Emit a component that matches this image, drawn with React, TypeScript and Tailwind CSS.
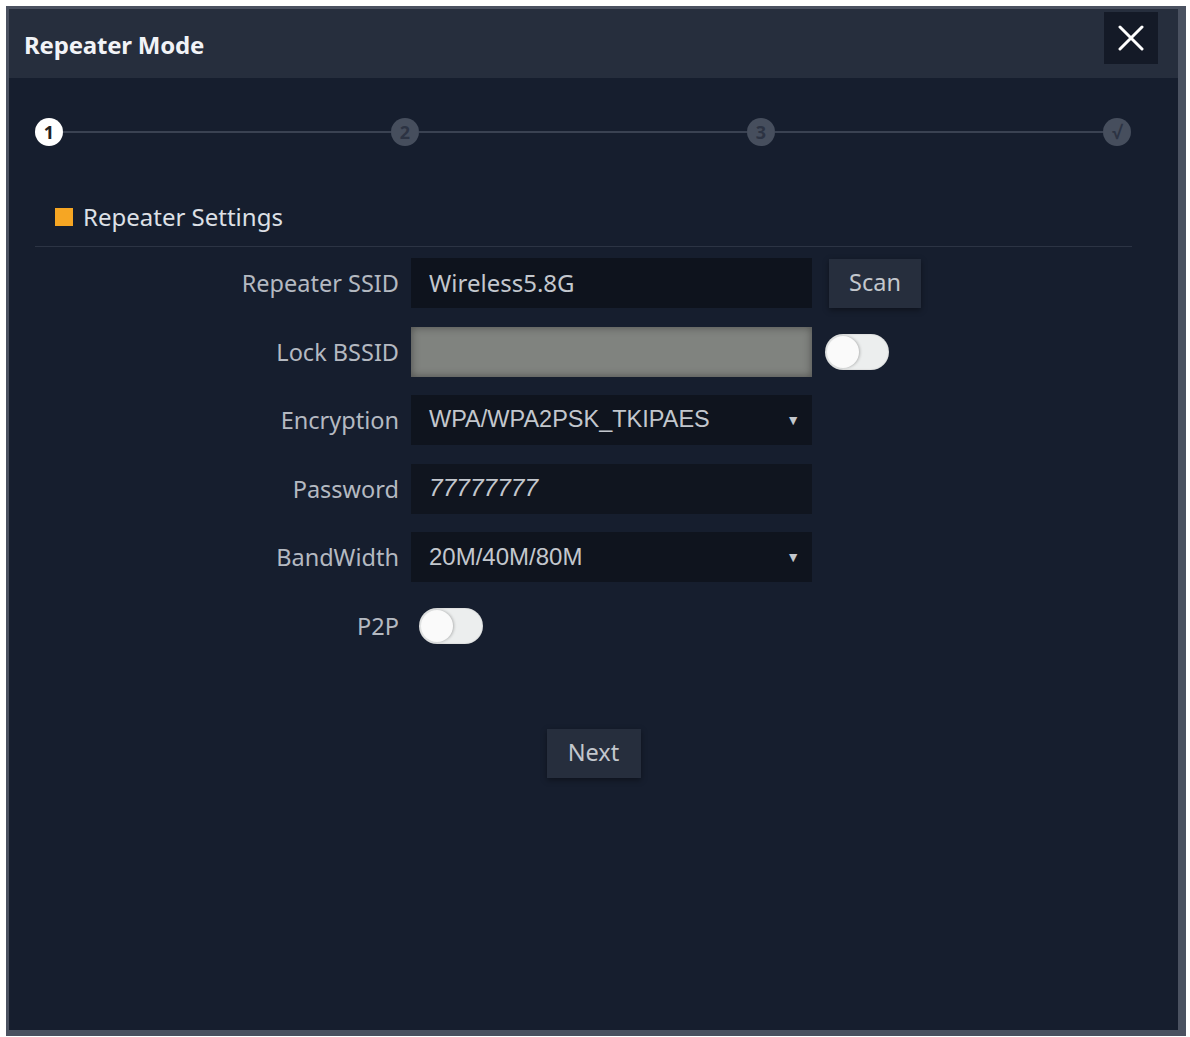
import React from "react";

const labelFont = { fontFamily: '"Noto Sans", "Open Sans", sans-serif' };
const arialFont = { fontFamily: '"Liberation Sans", Arial, sans-serif' };

function Toggle() {
  return (
    <div className="relative w-[64px] h-[36px] rounded-full bg-[#eceeee] shadow-[inset_0_0_2px_rgba(0,0,0,0.2)]">
      <div className="absolute left-[2px] top-[2px] w-[32px] h-[32px] rounded-full bg-[#fafafa] shadow-[1px_0_3px_rgba(0,0,0,0.25)]" />
    </div>
  );
}

function Row({ label, children }: { label: string; children: React.ReactNode }) {
  return (
    <div className="flex items-center h-[50px]">
      <div className="w-[390px] text-right text-[23.5px] text-[#b4b9c1] pt-[2px]" style={labelFont}>
        {label}
      </div>
      <div className="ml-[12px] flex items-center">{children}</div>
    </div>
  );
}

function Step({ n, active }: { n: string; active?: boolean }) {
  return (
    <div
      className={
        "w-[28px] h-[28px] rounded-full flex items-center justify-center text-[18px] font-bold shrink-0 " +
        (active ? "bg-white text-[#222]" : "bg-[#464e5d] text-[#2c3343]")
      }
      style={labelFont}
    >
      {n}
    </div>
  );
}

export default function App() {
  return (
    <div className="w-[1190px] h-[1037px] bg-white pt-[6px] pl-[6px]">
      <div className="w-[1180px] h-[1030px] bg-[#161e2e] border-l-[3px] border-t-[3px] border-r-[8px] border-b-[6px] border-[#4a5160] flex flex-col">
        {/* Header */}
        <div className="h-[69px] bg-[#262e3d] flex items-start justify-between pl-[15px] pr-[20px] shrink-0">
          <div
            className="mt-[21px] text-[24px] font-bold text-[#f1f3f7] leading-[30px] tracking-[-0.2px]"
            style={labelFont}
          >
            Repeater Mode
          </div>
          <div className="mt-[3px] w-[54px] h-[52px] bg-[#141a27] flex items-center justify-center">
            <svg width="26" height="26" viewBox="0 0 26 26">
              <path d="M2 2 L24 24 M24 2 L2 24" stroke="#ffffff" strokeWidth="3" strokeLinecap="round" />
            </svg>
          </div>
        </div>

        {/* Body */}
        <div className="flex flex-col pt-[40px]">
          {/* Stepper */}
          <div className="flex items-center pl-[26px] pr-[47px]">
            <Step n="1" active />
            <div className="flex-1 h-[2px] bg-[#3a4252]" />
            <Step n="2" />
            <div className="flex-1 h-[2px] bg-[#3a4252]" />
            <Step n="3" />
            <div className="flex-1 h-[2px] bg-[#3a4252]" />
            <Step n="√" />
          </div>

          {/* Section heading */}
          <div className="mt-[56px] h-[30px] flex items-center pl-[46px]">
            <div className="w-[18px] h-[18px] bg-[#f6a623]" />
            <div className="ml-[10px] text-[24px] text-[#dde0e6]" style={labelFont}>
              Repeater Settings
            </div>
          </div>
          <div className="mt-[14px] ml-[26px] w-[1097px] h-[1px] bg-[#2c3444]" />

          {/* Form */}
          <div className="mt-[11px] flex flex-col gap-[18.5px]">
            <Row label="Repeater SSID">
              <div className="w-[401px] h-[50px] bg-[#0e131d] flex items-center pl-[18px] text-[24px] text-[#c3c7cd]" style={labelFont}>
                Wireless5.8G
              </div>
              <div className="ml-[17px] w-[92px] h-[49px] bg-[#262e3d] flex items-center justify-center text-[23.5px] text-[#c3c7cd] shadow-[0_2px_6px_rgba(0,0,0,0.4)]" style={labelFont}>
                Scan
              </div>
            </Row>
            <Row label="Lock BSSID">
              <div className="w-[401px] h-[50px] bg-[#80837f] shadow-[inset_0_0_8px_rgba(40,40,40,0.6)]" />
              <div className="ml-[13px]">
                <Toggle />
              </div>
            </Row>
            <Row label="Encryption">
              <div
                className="w-[401px] h-[50px] bg-[#0f141e] flex items-center justify-between pl-[18px] pr-[12px] text-[23.5px] text-[#c3c7cd]"
                style={arialFont}
              >
                <span>WPA/WPA2PSK_TKIPAES</span>
                <span className="text-[14px]">▼</span>
              </div>
            </Row>
            <Row label="Password">
              <div
                className="w-[401px] h-[50px] bg-[#10151f] flex items-center pl-[18px] text-[24.5px] italic text-[#c3c7cd]"
                style={arialFont}
              >
                77777777
              </div>
            </Row>
            <Row label="BandWidth">
              <div
                className="w-[401px] h-[50px] bg-[#0f141e] flex items-center justify-between pl-[18px] pr-[12px] text-[24px] text-[#c3c7cd]"
                style={arialFont}
              >
                <span>20M/40M/80M</span>
                <span className="text-[14px]">▼</span>
              </div>
            </Row>
            <Row label="P2P">
              <div className="ml-[8px]">
                <Toggle />
              </div>
            </Row>
          </div>

          {/* Next */}
          <div className="mt-[78px] flex justify-center">
            <div className="w-[94px] h-[49px] bg-[#262e3d] flex items-center justify-center text-[23.5px] text-[#c3c7cd] shadow-[0_2px_6px_rgba(0,0,0,0.4)]" style={labelFont}>
              Next
            </div>
          </div>
        </div>
      </div>
    </div>
  );
}
